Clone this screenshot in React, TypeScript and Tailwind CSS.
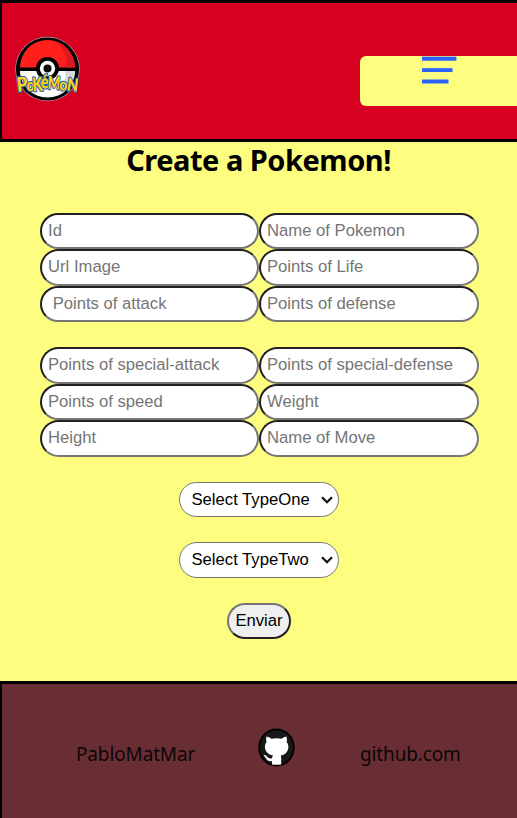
const inputBase =
  "block w-full rounded-[20px] border-2 border-t-[#212121] border-l-[#212121] border-r-[#767676] border-b-[#767676] bg-white px-[6px] text-[16.67px] leading-none text-black placeholder:text-[#757575] placeholder:opacity-100 outline-none";

function Field({ label, height }: { label: string; height: string }) {
  return <input className={`${inputBase} ${height}`} placeholder={label} />;
}

function TypeSelect({ label, height }: { label: string; height: string }) {
  return (
    <button
      type="button"
      className={`flex w-[160px] items-center justify-between rounded-[20px] border border-[#767676] bg-white pl-[12px] pr-[5px] text-[16.67px] leading-none whitespace-nowrap ${height}`}
    >
      <span>{label}</span>
      <svg width="12" height="8" viewBox="0 0 12 8" fill="none" stroke="#101010" strokeWidth="2.2">
        <path d="M1 1.2 6 6.2 11 1.2" />
      </svg>
    </button>
  );
}

/* letter, x, baseline, font size, drawn width, tilt */
const wordmark: [string, number, number, number, number, number][] = [
  ["P", 2.5, 56, 20, 11, -7],
  ["o", 11.5, 54.5, 17, 8, 0],
  ["K", 18, 55.5, 19, 10, -5],
  ["é", 26, 52.5, 19, 8, -3],
  ["M", 32.5, 53, 18, 12.5, 3],
  ["o", 44, 54, 16, 8, 4],
  ["N", 51.5, 54.5, 18, 11, 7],
];

function PokemonLogo() {
  return (
    <svg width="66" height="66" viewBox="0 0 66 66" className="overflow-visible">
      <circle cx="32.500" cy="33" r="32.200" fill="#b9a5a9" />
      <circle cx="32.500" cy="33" r="31.600" fill="#000" />
      <path d="M5 31.500a27.500 27.500 0 0 1 55 0Z" fill="#ff1f1b" />
      <path d="M41 6A27.500 27.500 0 0 1 60 31.500H51Q54 16 41 6Z" fill="#dc1720" />
      <path d="M5 35a27.500 26.500 0 0 0 55 0Z" fill="#fff" />
      <path d="M50 35h10Q58 53 43 59.500 52 48 50 35Z" fill="#d8d9df" />
      <circle cx="32.500" cy="32.500" r="11.500" fill="#000" />
      <circle cx="32.500" cy="32.500" r="7.700" fill="#fff" />
      <circle cx="32.500" cy="32.500" r="4" fill="#080808" />
      <g
        fontFamily="Lato, sans-serif"
        fontWeight="900"
        strokeLinejoin="round"
        fill="#fbd21a"
        stroke="#285da5"
        strokeWidth="2.200"
        paintOrder="stroke"
      >
        {wordmark.map(([letter, x, y, size, width, angle], i) => (
          <text
            key={i}
            x={x}
            y={y}
            fontSize={size}
            textLength={width}
            lengthAdjust="spacingAndGlyphs"
            transform={`rotate(${angle} ${x} ${y})`}
          >
            {letter}
          </text>
        ))}
      </g>
    </svg>
  );
}

function GithubMark() {
  return (
    <svg width="37" height="39" viewBox="0 0 37 39">
      <ellipse cx="18.500" cy="19.500" rx="18.200" ry="19" fill="#000" />
      <ellipse cx="18.500" cy="19.500" rx="16.400" ry="17.200" fill="#191717" />
      <path
        fill="#fff"
        d="M8.500 8.600Q11 8.800 13.500 10.700 18.500 9.700 23.500 10.700 26 8.800 28.300 8.600 29.400 11.500 28.700 14 31 16.700 30.200 20.800 29 26.500 22.800 27.600 23.200 28.600 23.200 30.500V36.400Q18.500 37.300 14 36.400V33Q9.600 33.800 8.100 30.800 7.300 28.800 5.600 27.500 5.600 26.700 7 27 8.400 27.400 9.600 29.300 11 31 14 30.200 14.200 28.500 15.100 27.600 8.500 26.600 7.100 20.800 6.300 16.700 8.500 14 7.700 11.500 8.500 8.600Z"
      />
    </svg>
  );
}

export default function App() {
  return (
    <div className="flex h-[818px] w-[517px] flex-col overflow-hidden bg-[#fdfd80] font-['Noto_Sans','Open_Sans',sans-serif] text-black">
      <header className="flex h-[142px] shrink-0 justify-between border-y-[3px] border-l-2 border-black bg-[#d80020]">
        <div className="pt-[33px] pl-[13px]">
          <PokemonLogo />
        </div>
        <nav className="mt-[53px] h-[50px] w-[157px] rounded-l-[6px] bg-[#fdfd80] pl-[62px]">
          <button type="button" aria-label="Menu" className="block">
            <svg width="35" height="28" viewBox="0 0 35 28" fill="#2962ff" className="block">
              <rect x="0" y="0.700" width="34.400" height="4" />
              <rect x="0" y="12.200" width="30.500" height="3.800" />
              <rect x="0" y="23.500" width="26.500" height="4" />
            </svg>
          </button>
        </nav>
      </header>

      <main className="flex h-[539px] shrink-0 flex-col items-center">
        <h1 className="h-[71px] text-[29px] leading-[36px] font-bold tracking-[-0.48px] whitespace-nowrap">
          Create a Pokemon!
        </h1>
        <form className="flex flex-col items-center gap-[25px] font-['Liberation_Sans',Arial,sans-serif]">
          <div className="ml-[2px] grid w-[439px] grid-cols-[219px_220px]">
            <Field label="Id" height="h-[36px]" />
            <Field label="Name of Pokemon" height="h-[36px]" />
            <Field label="Url Image" height="h-[37px] pb-[2px]" />
            <Field label="Points of Life" height="h-[37px] pb-[2px]" />
            <Field label=" Points of attack" height="h-[36px]" />
            <Field label="Points of defense" height="h-[36px]" />
          </div>
          <div className="ml-[2px] grid w-[439px] grid-cols-[219px_220px]">
            <Field label="Points of special-attack" height="h-[37px] pb-[2px]" />
            <Field label="Points of special-defense" height="h-[37px] pb-[2px]" />
            <Field label="Points of speed" height="h-[36px]" />
            <Field label="Weight" height="h-[36px]" />
            <Field label="Height" height="h-[37px] pb-[2px]" />
            <Field label="Name of Move" height="h-[37px] pb-[2px]" />
          </div>
          <TypeSelect label="Select TypeOne" height="h-[35px] pt-px" />
          <TypeSelect label="Select TypeTwo" height="h-[36px]" />
          <button
            type="button"
            className="h-[36px] w-[64px] rounded-[20px] border-2 border-t-[#767676] border-r-[#212121] border-b-[#212121] border-l-[#767676] bg-[#efefef] pl-px text-[16.67px] leading-none"
          >
            Enviar
          </button>
        </form>
      </main>

      <footer className="flex h-[137px] shrink-0 items-start border-t-[3px] border-l-2 border-black bg-[#692e34] text-[19px] leading-[28px] tracking-[-0.14px] text-[#0d0607]">
        <span className="mt-[56px] ml-[74px] w-[182px]">PabloMatMar</span>
        <span className="mt-[44px] w-[102px]">
          <GithubMark />
        </span>
        <span className="mt-[56px]">github.com</span>
      </footer>
    </div>
  );
}
